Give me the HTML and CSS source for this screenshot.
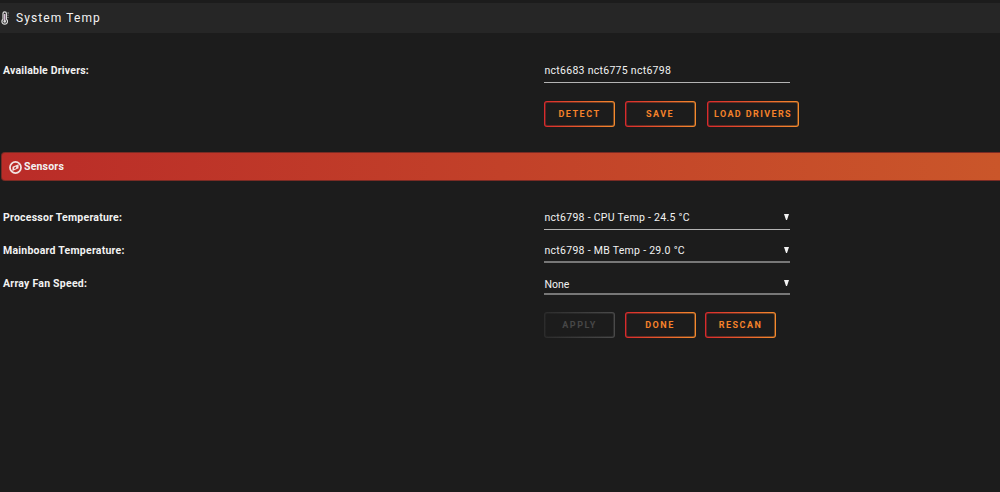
FILE: index.html
```html
<!DOCTYPE html>
<html lang="en">
<head>
<meta charset="utf-8">
<title>System Temp</title>
<link rel="stylesheet" href="styles.css">
</head>
<body>
<header class="titlebar">
  <svg class="thermo" viewBox="0 0 10 14"><path d="M3 8.2V2.5a1.7 1.7 0 0 1 3.4 0v5.7a2.8 2.8 0 1 1-3.4 0z" fill="none" stroke="#ddd" stroke-width="1.2"/><path d="M4.7 3v8" stroke="#e0c4dd" stroke-width="1.3"/><circle cx="4.7" cy="10.4" r="1.3" fill="#ddd"/><path d="M7.4 2h1.6M7.4 4.2h1.2M7.4 6.4h1.2" stroke="#bbb" stroke-width=".8"/></svg>
  <h1 class="title">System Temp</h1>
</header>
<main>
  <section class="drivers">
    <div class="row">
      <span class="label l-drivers">Available Drivers:</span>
      <div class="field"><span class="value">nct6683 nct6775 nct6798</span></div>
    </div>
    <div class="buttons">
      <button class="btn">DETECT</button><button class="btn">SAVE</button><button class="btn wide">LOAD DRIVERS</button>
    </div>
  </section>
  <div class="banner">
    <svg class="compass" viewBox="0 0 12 12"><circle cx="6" cy="6" r="5.1" fill="none" stroke="#f2e4e2" stroke-width="1.6"/><path d="M8.8 2.9v3.9L3.2 9.2V5.3z" fill="#f2e4e2"/><path d="M6.6 5.1v1.7L4.8 7.5V5.9z" fill="#b92e29"/></svg>
    <h2 class="subtitle">Sensors</h2>
  </div>
  <section class="sensors">
    <div class="row">
      <span class="label">Processor Temperature:</span>
      <div class="field"><span class="value">nct6798 - CPU Temp - 24.5 °C</span><i class="caret"></i></div>
    </div>
    <div class="row">
      <span class="label">Mainboard Temperature:</span>
      <div class="field soft"><span class="value">nct6798 - MB Temp - 29.0 °C</span><i class="caret"></i></div>
    </div>
    <div class="row">
      <span class="label">Array Fan Speed:</span>
      <div class="field soft last"><span class="none">None</span><i class="caret"></i></div>
    </div>
    <div class="buttons lower">
      <button class="btn" disabled>APPLY</button><button class="btn">DONE</button><button class="btn">RESCAN</button>
    </div>
  </section>
</main>
</body>
</html>
```
FILE: styles.css
```css
* { box-sizing: border-box; }
body {
  margin: 0;
  padding-top: 3px;
  height: 492px;
  overflow: hidden;
  background: #1c1c1c;
  color: #f2f2f2;
  font: 10.5px/14px Roboto, sans-serif;
  white-space: nowrap;
}
.titlebar {
  display: flex;
  align-items: center;
  height: 30px;
  background: #262626;
}
.thermo { width: 10px; height: 14px; margin-right: 6px; }
.title { margin: 0; font-size: 12px; font-weight: 400; letter-spacing: 1.1px; }
.drivers { height: 119px; padding-top: 28px; }
.row { display: grid; grid-template-columns: 544px 246px; }
.label { padding: 3px 0 0 3px; font-weight: 700; letter-spacing: .24px; }
.l-drivers { letter-spacing: .2px; }
.field {
  display: flex;
  justify-content: space-between;
  height: 22px;
  padding: 3px 0 0 .5px;
  border-bottom: 1px solid #b4b4b4;
}
.value { letter-spacing: .28px; }
.soft { height: 22px; border-bottom: 2px solid #777; }
.last { height: 21px; padding-top: 4px; }
.caret {
  width: 5px;
  height: 6px;
  margin: 3px 1px 0 0;
  background: #f2f2f2;
  clip-path: polygon(0 0, 100% 0, 60% 100%, 40% 100%);
}
.last .caret { margin-top: 2px; }
.buttons { display: flex; gap: 9.5px; padding: 18px 0 0 544px; }
/* The gradient ring is bright on its outer pixel and dimmed on its inner one. */
.btn {
  --ring: linear-gradient(90deg, #d92a2c, #f58a2d);
  width: 71px;
  height: 26px;
  padding: 1px;
  border: 1px solid transparent;
  border-radius: 3px;
  background:
    linear-gradient(#1c1c1c, #1c1c1c) content-box,
    linear-gradient(#1c1c1c99, #1c1c1c99) padding-box,
    var(--ring) border-box;
  color: #f5822a;
  font: 700 9px/12px Roboto, sans-serif;
  letter-spacing: 1.5px;
}
.wide { width: 92px; margin-left: 2px; letter-spacing: 1.4px; }
.btn:disabled { --ring: linear-gradient(90deg, #2c2c2c, #4a4a4a); color: #474747; }
.banner {
  display: flex;
  align-items: center;
  height: 29px;
  margin-left: 1px;
  padding-left: 7px;
  border: 1px solid #7a2b24;
  border-right: 0;
  border-radius: 4px 0 0 4px;
  background: linear-gradient(90deg, #ba2c28, #ca562a);
}
.compass { width: 13px; height: 13px; margin: 2px 2px 0 0; }
.subtitle { margin: 0; font-size: 10.5px; font-weight: 700; letter-spacing: .2px; }
.sensors { padding-top: 27px; }
.sensors .row { height: 33px; }
.lower { padding-top: 5px; }
```
